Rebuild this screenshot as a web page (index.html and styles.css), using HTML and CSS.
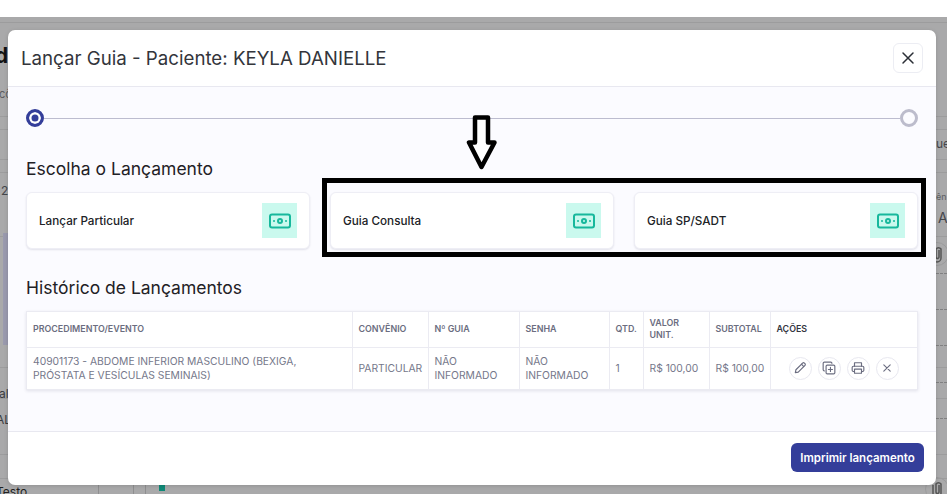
FILE: index.html
```html
<!DOCTYPE html>
<html lang="en">
<head>
    <meta charset="UTF-8">
    <meta name="viewport" content="width=device-width, initial-scale=1.0">
    <title>Lançar Guia</title>
    <link rel="stylesheet" href="styles.css">
</head>
<body>

    <svg width="0" height="0" class="defs">
        <symbol id="money" viewBox="0 0 24 24">
            <rect x="2" y="5.5" width="20" height="13" rx="2" fill="none" stroke="currentColor" stroke-width="2"/>
            <circle cx="12" cy="12" r="2" fill="none" stroke="currentColor" stroke-width="2"/>
            <path d="M6 12h.01M18 12h.01" fill="none" stroke="currentColor" stroke-width="2" stroke-linecap="round"/>
        </symbol>
        <symbol id="clip" viewBox="0 0 24 24">
            <circle cx="12" cy="12" r="11.5" fill="none" stroke="#9b9b9c"/>
            <path d="M8 8v8a4 4 0 0 0 8 0V7a3 3 0 0 0-5 0v8a1.5 1.5 0 0 0 3 0V8" fill="none" stroke="#555" stroke-width="1.5"/>
        </symbol>
    </svg>

    <!-- page behind the modal -->
    <div class="backdrop">
        <div class="top-strip"></div>
        <div class="page">
            <div class="line l1"></div>
            <div class="line l2"></div>
            <div class="line l3"></div>
            <div class="line l4"></div>
            <div class="line l5"></div>
            <div class="line l6"></div>
            <div class="line l7"></div>
            <div class="line l8"></div>
            <div class="line l9"></div>
            <div class="line l10"></div>
            <div class="line dashed d1"></div>
            <div class="line dashed d2"></div>
            <div class="line dashed d3"></div>
            <div class="line dashed d4"></div>
            <div class="line dashed d5"></div>
            <div class="vline v1"></div>
            <div class="vline v2"></div>
            <div class="vline v3"></div>
            <span class="bg-text bg-title">da</span>
            <span class="bg-text bg-small bg-a">cô</span>
            <span class="bg-text bg-b">2</span>
            <span class="bg-text bg-c">al</span>
            <span class="bg-text bg-d">AL</span>
            <span class="bg-text bg-e">Testo</span>
            <span class="bg-text bg-f">ue</span>
            <span class="bg-text bg-small bg-g">ên</span>
            <span class="bg-text bg-h">A</span>
            <svg class="bg-clip c1" width="24" height="24"><use href="#clip"/></svg>
            <svg class="bg-clip c2" width="24" height="24"><use href="#clip"/></svg>
            <div class="bg-panel"></div>
            <div class="bg-tab"></div>
        </div>
    </div>

    <div class="modal">
        <div class="modal-header">
            <h2>Lançar Guia - Paciente: KEYLA DANIELLE</h2>
            <button class="close-btn" type="button">
                <svg width="14" height="14" viewBox="0 0 14 14"><path d="M2 2l10 10M12 2L2 12" stroke="#2b2f36" stroke-width="1.5" stroke-linecap="round"/></svg>
            </button>
        </div>

        <div class="modal-body">
            <div class="stepper">
                <span class="step step-active"></span>
                <span class="step-line"></span>
                <span class="step"></span>
            </div>

            <h3 class="section-title">Escolha o Lançamento</h3>
            <div class="cards">
                <div class="card">
                    <span>Lançar Particular</span>
                    <span class="card-icon"><svg width="24" height="24"><use href="#money"/></svg></span>
                </div>
                <div class="card">
                    <span>Guia Consulta</span>
                    <span class="card-icon"><svg width="24" height="24"><use href="#money"/></svg></span>
                </div>
                <div class="card">
                    <span>Guia SP/SADT</span>
                    <span class="card-icon"><svg width="24" height="24"><use href="#money"/></svg></span>
                </div>
            </div>

            <h3 class="section-title history-title">Histórico de Lançamentos</h3>
            <div class="history-wrap">
                <table class="history">
                    <colgroup>
                        <col class="col-proc"><col class="col-conv"><col class="col-guia"><col class="col-senha">
                        <col class="col-qtd"><col class="col-valor"><col class="col-sub"><col>
                    </colgroup>
                    <thead>
                        <tr>
                            <th>PROCEDIMENTO/EVENTO</th>
                            <th>CONVÊNIO</th>
                            <th>Nº GUIA</th>
                            <th>SENHA</th>
                            <th>QTD.</th>
                            <th>VALOR UNIT.</th>
                            <th>SUBTOTAL</th>
                            <th class="th-actions">AÇÕES</th>
                        </tr>
                    </thead>
                    <tbody>
                        <tr>
                            <td class="td-proc">40901173 - ABDOME INFERIOR MASCULINO (BEXIGA, PRÓSTATA E VESÍCULAS SEMINAIS)</td>
                            <td>PARTICULAR</td>
                            <td>NÃO INFORMADO</td>
                            <td>NÃO INFORMADO</td>
                            <td>1</td>
                            <td class="td-money">R$ 100,00</td>
                            <td class="td-money">R$ 100,00</td>
                            <td>
                                <div class="actions">
                                    <span class="action">
                                        <svg width="14" height="14" viewBox="0 0 24 24" fill="none" stroke="#6b6d80" stroke-width="2" stroke-linejoin="round" stroke-linecap="round"><path d="M4 20l1-5L16.5 3.5a2.1 2.1 0 0 1 3 0l1 1a2.1 2.1 0 0 1 0 3L9 19z"/><path d="M14.5 5.5l4 4"/></svg>
                                    </span>
                                    <span class="action">
                                        <svg width="14" height="14" viewBox="0 0 24 24" fill="none" stroke="#6b6d80" stroke-width="2" stroke-linejoin="round" stroke-linecap="round"><rect x="7" y="7" width="15" height="15" rx="2"/><path d="M4 17a2 2 0 0 1-2-2V4a2 2 0 0 1 2-2h11a2 2 0 0 1 2 2"/><path d="M14.5 11v7M11 14.5h7"/></svg>
                                    </span>
                                    <span class="action">
                                        <svg width="14" height="14" viewBox="0 0 24 24" fill="none" stroke="#6b6d80" stroke-width="2" stroke-linejoin="round" stroke-linecap="round"><path d="M6 9V3h12v6"/><path d="M6 18H4a2 2 0 0 1-2-2v-5a2 2 0 0 1 2-2h16a2 2 0 0 1 2 2v5a2 2 0 0 1-2 2h-2"/><rect x="6" y="14" width="12" height="7"/></svg>
                                    </span>
                                    <span class="action">
                                        <svg width="8" height="8" viewBox="0 0 10 10"><path d="M1 1l8 8M9 1l-8 8" stroke="#6b6d80" stroke-width="1.4" stroke-linecap="round"/></svg>
                                    </span>
                                </div>
                            </td>
                        </tr>
                    </tbody>
                </table>
            </div>
        </div>

        <div class="modal-footer">
            <button class="print-btn" type="button">Imprimir lançamento</button>
        </div>
    </div>

    <!-- annotations drawn on top of the screenshot -->
    <svg class="mark-arrow" width="32" height="58" viewBox="0 0 32 58">
        <path d="M9 3.5h13v25h6.500L15.500 53 3 28.500h6z" fill="#fff" stroke="#000" stroke-width="4.5" stroke-linejoin="round"/>
    </svg>
    <div class="mark-box"></div>

</body>
</html>
```

FILE: styles.css
```css
* {
    box-sizing: border-box;
}

html, body {
    height: 100%;
}

body {
    margin: 0;
    overflow: hidden;
    font-family: Inter, "Liberation Sans", sans-serif;
    background-color: #ffffff;
    color: #1f2126;
}

.defs {
    position: absolute;
}

/* page behind the modal */
.backdrop {
    height: 494px;
    display: flex;
    flex-direction: column;
}

.top-strip {
    height: 17px;
    background-color: #ffffff;
}

.page {
    flex: 1;
    position: relative;
    background-color: #a9a9aa;
    overflow: hidden;
}

.line {
    position: absolute;
    left: 0;
    right: 0;
    height: 1px;
    background-color: #9c9c9d;
}

.dashed {
    left: 936px;
    background-color: transparent;
    border-top: 1px dashed #808081;
}

.l1 { top: 5px; }
.l2 { top: 99px; }
.l3 { top: 112px; }
.l4 { top: 142px; }
.l5 { top: 155px; }
.l6 { top: 219px; }
.l7 { top: 350px; }
.l8 { top: 381px; }
.l9 { top: 437px; }
.l10 { top: 461px; }
.d1 { top: 256px; }
.d2 { top: 292px; }
.d3 { top: 328px; }
.d4 { top: 365px; }
.d5 { top: 401px; }

.vline {
    position: absolute;
    top: 465px;
    bottom: 0;
    width: 1px;
    background-color: #8f8f90;
}

.v1 { left: 98px; }
.v2 { left: 133px; }
.v3 { left: 145px; }

.bg-text {
    position: absolute;
    font-size: 12px;
    color: #45464a;
    white-space: nowrap;
}

.bg-small {
    font-size: 9px;
    color: #5c5d61;
}

.bg-title {
    left: -5px;
    top: 26px;
    font-size: 21px;
    font-weight: 700;
    color: #111;
}

.bg-a { left: -1px; top: 70px; font-size: 11px; }
.bg-b { left: 1px; top: 166px; }
.bg-c { left: -1px; top: 369px; color: #3a3b3f; }
.bg-d { left: -4px; top: 395px; color: #3a3b3f; }
.bg-e { left: -4px; top: 467px; color: #222; }
.bg-f { left: 936px; top: 119px; }
.bg-g { left: 936px; top: 174px; }
.bg-h { left: 938px; top: 192px; font-size: 14px; }

.bg-clip {
    position: absolute;
    left: 925px;
}

.c1 { top: 225px; }
.c2 { top: 460px; }

.bg-panel {
    position: absolute;
    left: 3px;
    top: 216px;
    width: 5px;
    height: 112px;
    background-color: #9a9aae;
}

.bg-tab {
    position: absolute;
    left: 159px;
    top: 465px;
    width: 6px;
    height: 9px;
    background-color: #0f8a78;
}

/* modal */
.modal {
    position: absolute;
    left: 8px;
    top: 30px;
    width: 928px;
    height: 455px;
    display: flex;
    flex-direction: column;
    background-color: #ffffff;
    border-radius: 7px;
    overflow: hidden;
    box-shadow: 0 1px 4px rgba(0, 0, 0, 0.15);
}

.modal-header {
    height: 57px;
    padding: 0 13px;
    display: flex;
    align-items: center;
    justify-content: space-between;
    border-bottom: 1px solid #e8e8f0;
}

.modal-header h2 {
    margin: 0;
    font-size: 18.7px;
    font-weight: 400;
    color: #33353b;
}

.close-btn {
    width: 30px;
    height: 30px;
    padding: 0;
    display: flex;
    align-items: center;
    justify-content: center;
    background-color: #ffffff;
    border: 1px solid #ecedf3;
    border-radius: 6px;
}

.modal-body {
    height: 345px;
    padding: 22px 18px 0;
    background-color: #fbfbff;
    border-bottom: 1px solid #e8e8f0;
}

.stepper {
    display: flex;
    align-items: center;
    height: 18px;
}

.step {
    width: 18px;
    height: 18px;
    border: 3px solid #bcbccc;
    border-radius: 50%;
    background-color: #fbfbff;
}

.step-active {
    border-color: #343e9a;
    background-color: #343e9a;
    box-shadow: inset 0 0 0 2.5px #ffffff;
}

.step-line {
    flex: 1;
    height: 1px;
    background-color: #bcbccf;
}

.section-title {
    margin: 31px 0 0;
    font-size: 17.5px;
    line-height: 21px;
    font-weight: 400;
    color: #1f2126;
}

.cards {
    margin-top: 13px;
    display: flex;
    gap: 20px;
}

.card {
    flex: 1;
    height: 57px;
    padding: 0 12px;
    display: flex;
    align-items: center;
    justify-content: space-between;
    background-color: #ffffff;
    border: 1px solid #eeeef5;
    border-radius: 6px;
    font-size: 11.7px;
    font-weight: 500;
    color: #202226;
    box-shadow: 0 1px 2px rgba(40, 40, 80, 0.12);
}

.card-icon {
    width: 35px;
    height: 35px;
    display: flex;
    align-items: center;
    justify-content: center;
    background-color: #caf9ee;
    color: #17b89c;
}

.history-title {
    margin-top: 28px;
}

.history-wrap {
    margin-top: 13px;
    border: 1px solid #ebebf2;
    background-color: #ffffff;
    box-shadow: 0 1px 3px rgba(40, 40, 80, 0.12);
}

.history {
    width: 100%;
    table-layout: fixed;
    border-collapse: collapse;
}

.col-proc { width: 325px; }
.col-conv { width: 76px; }
.col-guia { width: 91px; }
.col-senha { width: 90px; }
.col-qtd { width: 34px; }
.col-valor { width: 66px; }
.col-sub { width: 61px; }

.history th, .history td {
    padding: 0 6px;
    border-left: 1px solid #ebebf2;
    text-align: left;
    vertical-align: middle;
}

.history th:first-child, .history td:first-child {
    border-left: none;
}

.history th {
    height: 35px;
    font-size: 8.9px;
    line-height: 12px;
    font-weight: 600;
    color: #6b6d80;
    border-bottom: 1px solid #ebebf2;
}

.history .th-actions {
    color: #35363f;
}

.history td {
    height: 42px;
    font-size: 10.3px;
    line-height: 14px;
    color: #75778a;
}

.history .td-proc {
    padding-right: 45px;
}

.history .td-money {
    padding-right: 0;
    white-space: nowrap;
}

.actions {
    display: flex;
    justify-content: center;
    gap: 6px;
}

.action {
    width: 23px;
    height: 23px;
    display: flex;
    align-items: center;
    justify-content: center;
    border: 1px solid #e8e8f0;
    border-radius: 50%;
    background-color: #ffffff;
}

.modal-footer {
    flex: 1;
    padding: 11px 12px 0 0;
    display: flex;
    justify-content: flex-end;
    align-items: flex-start;
}

.print-btn {
    width: 133px;
    height: 29px;
    padding: 0;
    background-color: #343e9a;
    color: #ffffff;
    border: none;
    border-radius: 6px;
    font-family: inherit;
    font-size: 11.5px;
    font-weight: 600;
}

/* annotations */
.mark-arrow {
    position: absolute;
    left: 466px;
    top: 114px;
}

.mark-box {
    position: absolute;
    left: 322px;
    top: 178px;
    width: 604px;
    height: 79px;
    border: 5px solid #000000;
}
```
